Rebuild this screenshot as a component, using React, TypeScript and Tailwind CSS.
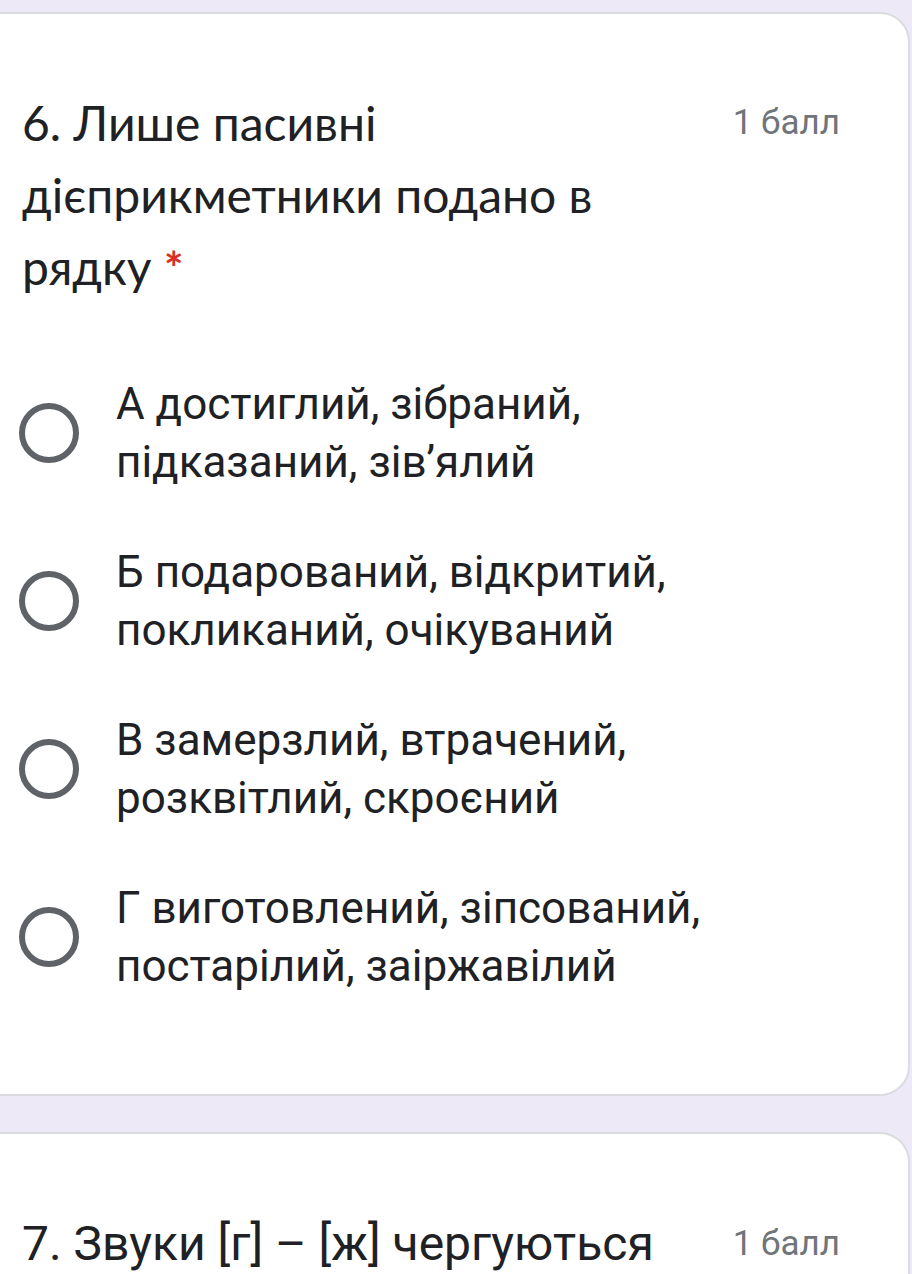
const OPTIONS = [
  "А достиглий, зібраний, підказаний, зів’ялий",
  "Б подарований, відкритий, покликаний, очікуваний",
  "В замерзлий, втрачений, розквітлий, скроєний",
  "Г виготовлений, зіпсований, постарілий, заіржавілий",
];

export default function App() {
  return (
    <div className="min-h-screen bg-[#ede9f7] pt-3 overflow-hidden font-['Roboto',sans-serif]">
      {/* Question 6 */}
      <section className="-ml-8 mr-[2px] bg-white border-2 border-[#dadce0] rounded-r-[30px] pl-[52px] pt-[73px] pb-[99px]">
        <div className="flex items-start">
          <h2 className="w-[640px] font-['Lato',sans-serif] text-[48px] leading-[72px] text-[#202124]">
            6. Лише пасивні дієприкметники подано в рядку{" "}
            <span className="text-[#d93025] text-[46px] font-bold">*</span>
          </h2>
          <span className="ml-auto mr-[68px] text-[35px] leading-[72px] text-[#70757a]">1 балл</span>
        </div>

        <ul className="mt-[71px] flex flex-col gap-[52px]">
          {OPTIONS.map((o) => (
            <li key={o} className="flex items-center gap-[37px]">
              <span className="shrink-0 ml-[-3px] w-[60px] h-[60px] rounded-full border-[6px] border-[#5f6368]" />
              <p className="w-[660px] text-[44px] leading-[58px] text-[#202124]">{o}</p>
            </li>
          ))}
        </ul>
      </section>

      <div className="h-[36px]" />

      {/* Question 7 */}
      <section className="-ml-8 mr-[2px] bg-white border-2 border-b-0 border-[#dadce0] rounded-tr-[30px] pl-[52px] pt-[74px] pb-10">
        <div className="flex items-start">
          <h2 className="text-[48px] leading-[72px] text-[#202124]">
            7. Звуки [г] – [ж] чергуються
          </h2>
          <span className="ml-auto mr-[68px] text-[35px] leading-[72px] text-[#70757a]">1 балл</span>
        </div>
      </section>
    </div>
  );
}
